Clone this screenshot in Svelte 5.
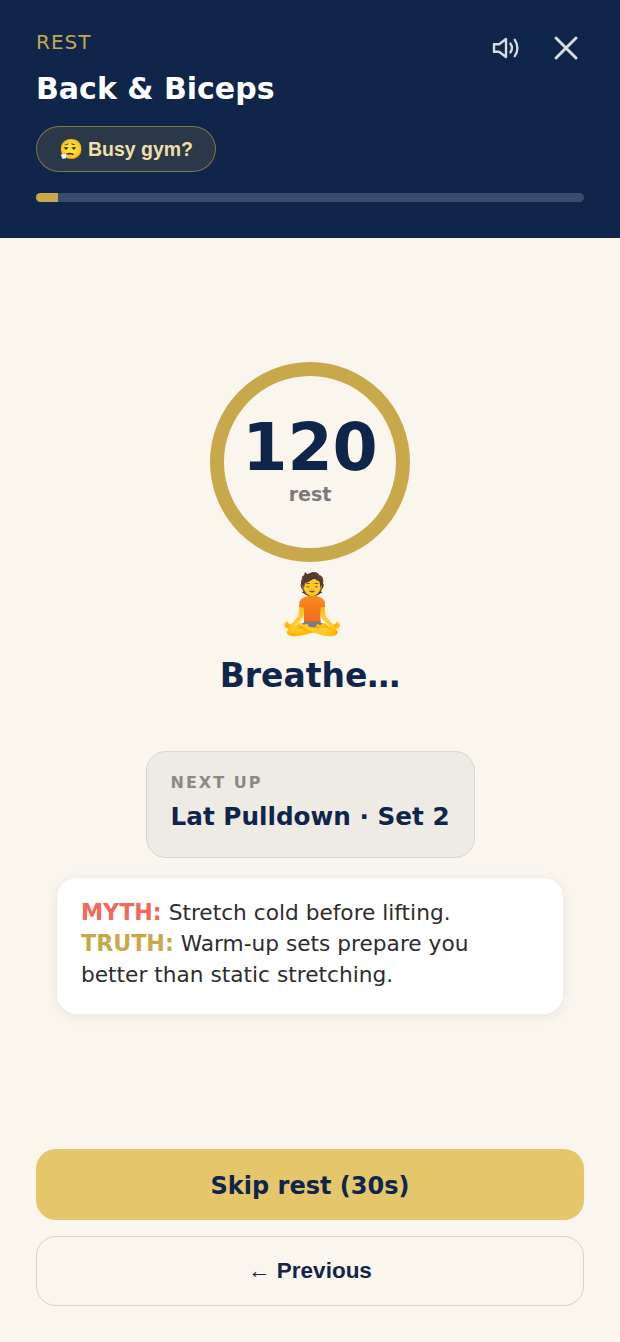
<script>
  let seconds = 120;
</script>

<div class="screen">
  <header class="top">
    <div class="top-row">
      <div>
        <div class="phase">REST</div>
        <h1>Back &amp; Biceps</h1>
      </div>
      <div class="icons">
        <button class="icon" aria-label="Sound">
          <svg width="30" height="30" viewBox="0 0 24 24" fill="none" stroke="currentColor" stroke-width="1.9" stroke-linecap="round" stroke-linejoin="round">
            <path d="M12 4.8 6.5 9H2.4v6h4.1l5.5 4.2z" />
            <path d="M15.5 8.5a6 6 0 0 1 0 7" />
            <path d="M19 5.5a11 11 0 0 1 0 13" />
          </svg>
        </button>
        <button class="icon" aria-label="Close">
          <svg width="30" height="30" viewBox="0 0 24 24" fill="none" stroke="currentColor" stroke-width="2.4" stroke-linecap="round">
            <path d="M4 4l16 16M20 4 4 20" />
          </svg>
        </button>
      </div>
    </div>
    <button class="busy">😮‍💨 Busy gym?</button>
    <div class="track"><div class="fill"></div></div>
  </header>

  <main class="body">
    <div class="ring">
      <div class="count">{seconds}</div>
      <div class="count-label">rest</div>
    </div>
    <div class="emoji">🧘</div>
    <h2>Breathe…</h2>
    <div class="next">
      <div class="next-label">NEXT UP</div>
      <div class="next-name">Lat Pulldown · Set 2</div>
    </div>
    <div class="tip">
      <strong class="myth">MYTH:</strong> Stretch cold before lifting.<br />
      <strong class="truth">TRUTH:</strong> Warm-up sets prepare you better than static stretching.
    </div>
  </main>

  <footer class="actions">
    <button class="skip">Skip rest (30s)</button>
    <button class="prev">← Previous</button>
  </footer>
</div>

<style>
  :global(body) {
    margin: 0;
    background: #faf6ee;
  }

  .screen {
    height: 1342px;
    display: flex;
    flex-direction: column;
    font-family: "DejaVu Sans", sans-serif;
    background: #faf6ee;
  }

  .top {
    background: #0f2549;
    padding: 30px 36px 36px;
    height: 238px;
    box-sizing: border-box;
  }

  .top-row {
    display: flex;
    justify-content: space-between;
    align-items: flex-start;
  }

  .phase {
    font-size: 20px;
    line-height: 24px;
    letter-spacing: 1px;
    color: #c9a84c;
  }

  h1 {
    margin: 17px 0 0;
    font-size: 30px;
    line-height: 36px;
    font-weight: 700;
    color: #fff;
  }

  .icons {
    display: flex;
    gap: 12px;
    margin-right: -6px;
  }

  .icon {
    width: 48px;
    height: 36px;
    padding: 0;
    border: none;
    background: none;
    color: #d8dce1;
    display: flex;
    align-items: center;
    justify-content: center;
  }

  .busy {
    display: block;
    margin-top: 19px;
    height: 46px;
    padding: 0 21.5px;
    border-radius: 23px;
    border: 1.5px solid rgba(201, 168, 76, 0.55);
    background: rgba(201, 168, 76, 0.15);
    color: #f0dfa8;
    font-family: "Liberation Sans", sans-serif;
    font-size: 19.5px;
    font-weight: 700;
  }

  .track {
    margin-top: 21px;
    height: 9px;
    border-radius: 5px;
    background: #3a4d6e;
    overflow: hidden;
  }

  .fill {
    width: 4%;
    height: 100%;
    background: #c9a84c;
  }

  .body {
    flex: 1;
    display: flex;
    flex-direction: column;
    align-items: center;
    padding-top: 124px;
  }

  .ring {
    width: 200px;
    height: 200px;
    box-sizing: border-box;
    border: 14px solid #c9a84c;
    border-radius: 50%;
    display: flex;
    flex-direction: column;
    align-items: center;
    justify-content: center;
    padding-bottom: 6px;
  }

  .count {
    font-size: 65px;
    line-height: 70px;
    font-weight: 700;
    color: #0f2549;
  }

  .count-label {
    font-size: 19px;
    line-height: 22px;
    font-weight: 700;
    color: #7a7a78;
  }

  .emoji {
    margin: 7px 0 0 4px;
    font-size: 58px;
    line-height: 70px;
  }

  h2 {
    margin: 17px 0 0;
    font-size: 33px;
    line-height: 40px;
    font-weight: 700;
    color: #0f2549;
  }

  .next {
    margin-top: 55px;
    box-sizing: border-box;
    width: 329px;
    height: 107px;
    padding: 20px 24px;
    border: 1.5px solid #d9d6cb;
    border-radius: 20px;
    background: #eeebe4;
  }

  .next-label {
    font-size: 16px;
    line-height: 22px;
    font-weight: 700;
    letter-spacing: 2px;
    color: #8a8a85;
  }

  .next-name {
    margin-top: 7px;
    font-size: 24.7px;
    line-height: 32px;
    font-weight: 700;
    color: #0f2549;
    white-space: nowrap;
  }

  .tip {
    margin-top: 20px;
    box-sizing: border-box;
    width: 506px;
    height: 136px;
    padding: 19px 24px;
    border-radius: 20px;
    background: #fff;
    box-shadow: 0 2px 12px rgba(0, 0, 0, 0.08);
    font-size: 21.7px;
    line-height: 31px;
    color: #2d2d2d;
  }

  .myth {
    color: #f4685a;
    font-size: 22.2px;
  }

  .truth {
    color: #c9a84c;
    font-size: 22.2px;
  }

  .actions {
    padding: 0 36px 36px;
    display: flex;
    flex-direction: column;
    gap: 16px;
  }

  .skip {
    height: 71px;
    border: none;
    border-radius: 20px;
    background: #e5c76b;
    color: #0f2549;
    font-family: "DejaVu Sans", sans-serif;
    font-size: 24px;
    font-weight: 700;
    padding-top: 3px;
  }

  .prev {
    height: 70px;
    border: 1.5px solid #d4d1c6;
    border-radius: 20px;
    background: transparent;
    color: #0f2549;
    font-family: "Liberation Sans", sans-serif;
    font-size: 22.5px;
    font-weight: 700;
  }
</style>
